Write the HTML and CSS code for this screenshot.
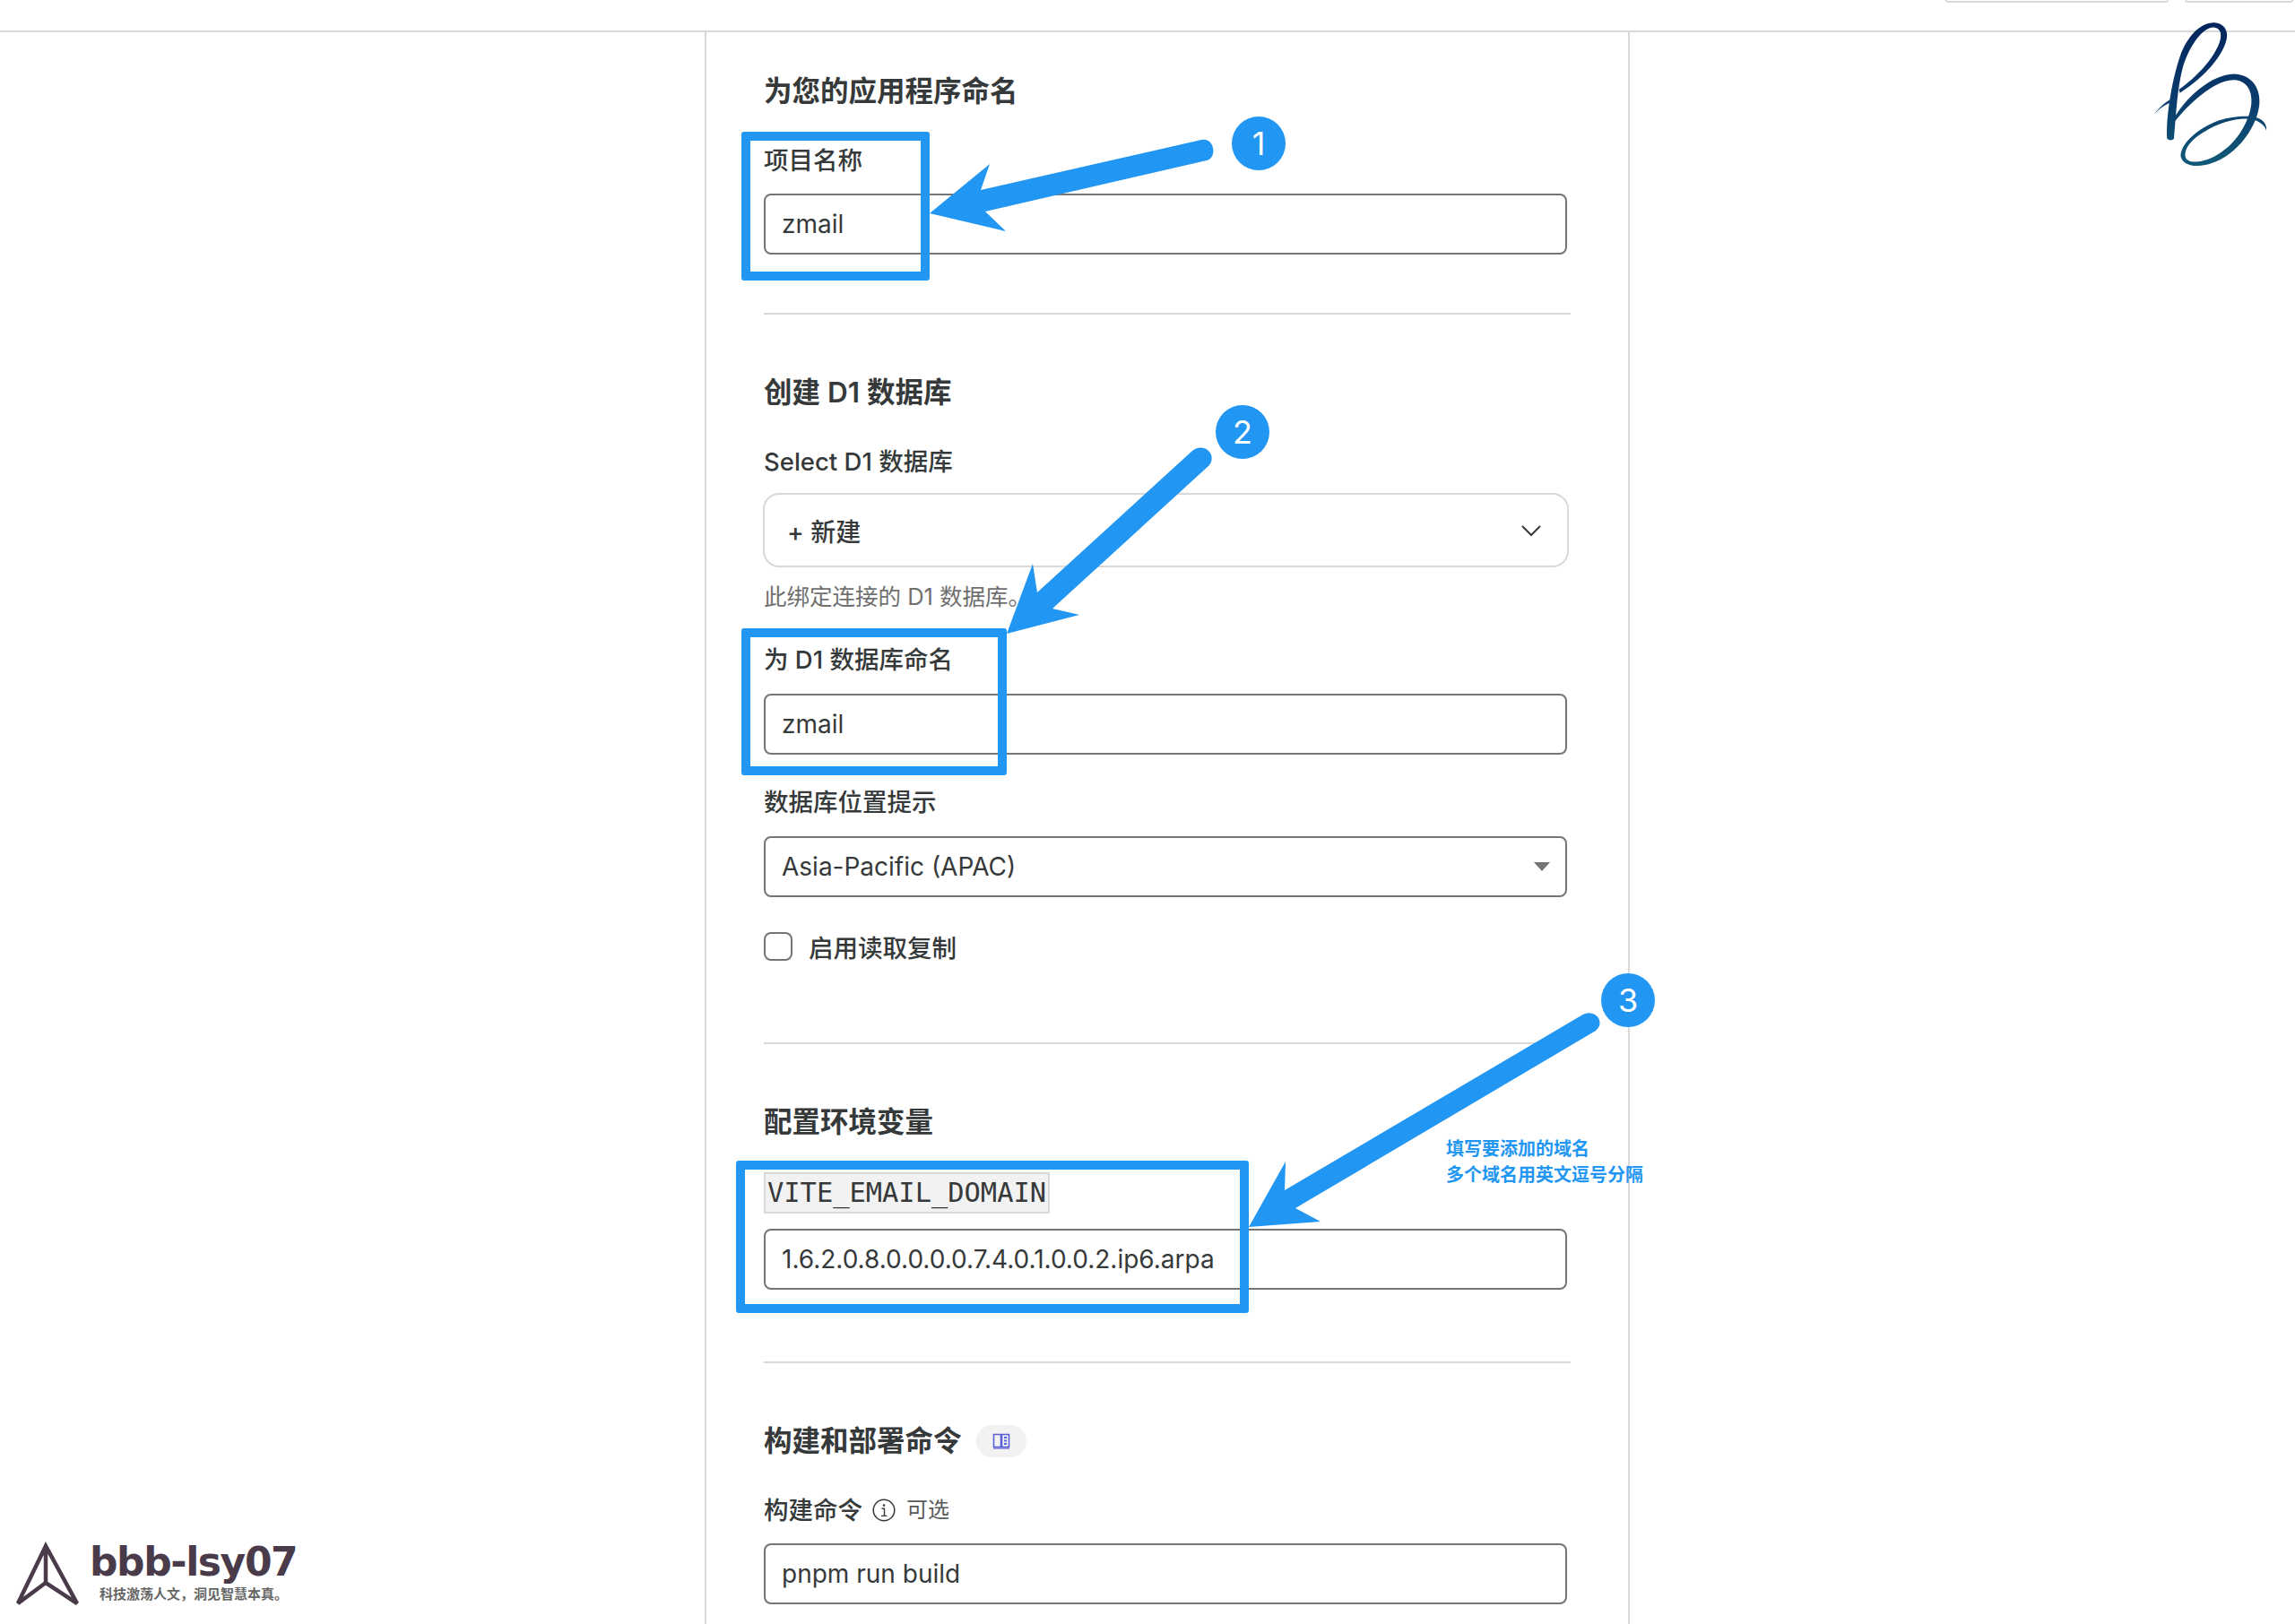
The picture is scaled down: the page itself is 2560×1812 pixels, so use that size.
FILE: index.html
```html
<!DOCTYPE html>
<html lang="zh-CN">
<head>
    <meta charset="UTF-8">
    <meta name="viewport" content="width=device-width, initial-scale=1.0">
    <title>创建应用程序</title>
    <link rel="stylesheet" href="styles.css">
</head>
<body>

    <header class="topbar">
        <span class="top-btn top-btn-wide"></span>
        <span class="top-btn top-btn-small"></span>
    </header>

    <main class="column">
        <section class="group">
            <h2 class="group-title">为您的应用程序命名</h2>
            <div class="label">项目名称</div>
            <div class="input">zmail</div>
        </section>

        <section class="group">
            <h2 class="group-title">创建 D1 数据库</h2>
            <div class="label">Select D1 数据库</div>
            <div class="picker">
                <span>+ 新建</span>
                <svg class="chevron" viewBox="0 0 24 14"><path d="M2 2l10 10L22 2"/></svg>
            </div>
            <div class="hint">此绑定连接的 D1 数据库。</div>
            <div class="label label-after-hint">为 D1 数据库命名</div>
            <div class="input input-tight">zmail</div>
            <div class="label label-after-input">数据库位置提示</div>
            <div class="input input-tight select">
                <span>Asia-Pacific (APAC)</span>
                <span class="caret"></span>
            </div>
            <div class="check-row">
                <span class="checkbox"></span>
                <span class="check-label">启用读取复制</span>
            </div>
        </section>

        <section class="group group-env">
            <h2 class="group-title">配置环境变量</h2>
            <div class="env-name"><code>VITE_EMAIL_DOMAIN</code></div>
            <div class="input input-env">1.6.2.0.8.0.0.0.0.7.4.0.1.0.0.2.ip6.arpa</div>
        </section>

        <section class="group group-last">
            <h2 class="group-title title-row">
                构建和部署命令
                <span class="doc-badge">
                    <svg viewBox="0 0 20 20" width="20" height="20">
                        <path d="M1.5 2.5h8v14h-8zM10.5 2.5h8v14h-8z" fill="none" stroke="#5b5fd6" stroke-width="1.6"/>
                        <path d="M13 6h3M13 9.5h3M13 13h3" stroke="#5b5fd6" stroke-width="1.8"/>
                        <path d="M1 18h18" stroke="#5b5fd6" stroke-width="1.2"/>
                    </svg>
                </span>
            </h2>
            <div class="label label-row">
                构建命令
                <svg class="info" viewBox="0 0 26 26" width="26" height="26">
                    <circle cx="13" cy="13" r="11.8" fill="none" stroke="#36393a" stroke-width="1.5"/>
                    <circle cx="13" cy="7.6" r="1.3" fill="#36393a"/>
                    <path d="M10.5 11.2h3v8M10 19.4h6.4" fill="none" stroke="#36393a" stroke-width="1.4"/>
                </svg>
                <span class="optional">可选</span>
            </div>
            <div class="input">pnpm run build</div>
        </section>
    </main>

    <!-- hand drawn annotations on top of the screenshot -->
    <div class="mark mark-1"></div>
    <div class="mark mark-2"></div>
    <div class="mark mark-3"></div>

    <svg class="arrows" viewBox="0 0 2560 1812" width="2560" height="1812">
        <path d="M1037 238L1104 183L1094 212L1340 156C1355 153 1358 176 1346 179L1099 236L1122 258Z"/>
        <path d="M1123 707L1152 629L1157 661L1330 503C1342 493 1358 506 1349 519L1174 679L1204 686Z"/>
        <path d="M1393 1369L1434 1296L1433 1328L1764 1133C1778 1124 1792 1140 1780 1150L1445 1348L1473 1363Z"/>
    </svg>

    <span class="step step-1">1</span>
    <span class="step step-2">2</span>
    <span class="step step-3">3</span>

    <div class="note">填写要添加的域名<br>多个域名用英文逗号分隔</div>

    <svg class="signature" viewBox="810 70 400 500" width="133" height="167">
        <defs>
            <linearGradient id="ink" gradientUnits="userSpaceOnUse" x1="1000" y1="80" x2="1000" y2="560">
                <stop offset="0" stop-color="#03245c"/>
                <stop offset="0.55" stop-color="#0b3d6e"/>
                <stop offset="1" stop-color="#115a78"/>
            </linearGradient>
        </defs>
        <path fill="url(#ink)" d="M862 465C858 400 875 280 905 190C930 120 975 75 1020 76C1050 77 1068 100 1062 130C1052 180 1000 250 905 312L902 300C985 240 1035 170 1042 125C1045 100 1030 90 1012 92C975 98 935 160 915 225C895 300 892 390 885 465Q875 475 862 465Z"/>
        <path fill="url(#ink)" d="M882 404C920 330 1010 250 1085 248C1140 248 1175 290 1172 345C1168 420 1100 520 1010 548C960 565 915 555 908 525C905 490 950 440 1020 410C1070 390 1130 385 1165 395C1185 402 1198 418 1195 438C1190 420 1170 405 1145 400C1100 393 1040 410 990 440C945 465 915 500 925 530C935 550 980 545 1020 525C1090 490 1140 410 1145 345C1148 300 1125 268 1085 268C1030 268 950 330 890 405Z"/>
        <path fill="url(#ink)" d="M818 385C835 360 860 340 880 330L880 342C855 350 835 365 818 385Z"/>
    </svg>

    <div class="watermark">
        <svg class="watermark-icon" viewBox="0 0 76 76" width="76" height="76">
            <path d="M35 5L4 69L35 46L70 69ZM35 5V46" fill="none" stroke="#4a3b4b" stroke-width="4.5" stroke-linejoin="miter"/>
        </svg>
        <div>
            <div class="watermark-name">bbb-lsy07</div>
            <div class="watermark-tag">科技激荡人文，洞见智慧本真。</div>
        </div>
    </div>

</body>
</html>
```

FILE: styles.css
```css
* {
    box-sizing: border-box;
}

html, body {
    margin: 0;
    padding: 0;
}

body {
    position: relative;
    width: 2560px;
    height: 1812px;
    overflow: hidden;
    background-color: #fff;
    color: #36393a;
    font-family: Inter, "Noto Sans CJK SC", sans-serif;
}

.topbar {
    display: flex;
    justify-content: flex-end;
    gap: 18px;
    height: 36px;
    padding-right: 2px;
    border-bottom: 2px solid #d9d9d9;
}

.top-btn {
    height: 3px;
    border: 2px solid #d9d9d9;
    border-top: none;
    border-radius: 0 0 8px 8px;
}

.top-btn-wide {
    width: 249px;
}

.top-btn-small {
    width: 121px;
}

.column {
    width: 1032px;
    height: 1776px;
    margin-left: 786px;
    padding: 44px 0 0 64px;
    border-left: 2px solid #d9d9d9;
    border-right: 2px solid #d9d9d9;
}

.group {
    width: 900px;
    padding-bottom: 65px;
    margin-bottom: 65px;
    border-bottom: 2px solid #d9d9d9;
}

.group-env {
    padding-bottom: 80px;
}

.group-last {
    border-bottom: none;
}

.group-title {
    margin: 0;
    font-size: 31.5px;
    line-height: 44px;
    font-weight: 600;
}

.title-row {
    display: flex;
    align-items: center;
}

.label {
    margin-top: 37px;
    font-size: 27.5px;
    line-height: 36px;
    font-weight: 500;
}

.label-after-hint {
    margin-top: 34px;
}

.label-after-input {
    margin-top: 35px;
}

.label-row {
    display: flex;
    align-items: center;
}

.input {
    display: flex;
    align-items: center;
    justify-content: space-between;
    width: 896px;
    height: 68px;
    margin-top: 19px;
    padding: 0 18px;
    border: 2px solid #757575;
    border-radius: 8px;
    background-color: #fff;
    font-size: 28px;
}

.input-tight {
    margin-top: 20px;
}

.input-env {
    margin-top: 17px;
}

.caret {
    width: 0;
    height: 0;
    margin-right: -1px;
    border-left: 9px solid transparent;
    border-right: 9px solid transparent;
    border-top: 10px solid #757575;
}

.picker {
    display: flex;
    align-items: center;
    justify-content: space-between;
    width: 899px;
    height: 83px;
    margin: 17px 0 0 -1px;
    padding: 0 28px 0 25px;
    border: 2px solid #d9d9d9;
    border-radius: 18px;
    font-size: 28px;
    font-weight: 500;
}

.chevron {
    width: 24px;
    height: 14px;
    fill: none;
    stroke: #36393a;
    stroke-width: 2;
}

.hint {
    margin-top: 15px;
    color: #6f6f6f;
    font-size: 25.5px;
    line-height: 36px;
}

.check-row {
    display: flex;
    align-items: center;
    gap: 18px;
    height: 32px;
    margin-top: 39px;
    margin-bottom: 26px;
}

.checkbox {
    width: 32px;
    height: 32px;
    border: 2px solid #757575;
    border-radius: 8px;
}

.check-label {
    font-size: 27.5px;
    font-weight: 500;
}

.env-name {
    display: flex;
    margin-top: 34px;
}

.env-name code {
    height: 46px;
    padding: 0 2px;
    border: 2px solid #d9d9d9;
    background-color: #f2f2f2;
    font-family: "DejaVu Sans Mono", monospace;
    font-size: 30.4px;
    line-height: 42px;
}

.doc-badge {
    display: flex;
    align-items: center;
    justify-content: center;
    width: 56px;
    height: 36px;
    margin-left: 16px;
    border-radius: 18px;
    background-color: #f2f2f2;
}

.info {
    margin-left: 11px;
}

.optional {
    margin-left: 12px;
    color: #595959;
    font-size: 24px;
    font-weight: 400;
}

.mark {
    position: absolute;
    border: 10px solid #2196f3;
    border-radius: 3px;
}

.mark-1 {
    left: 827px;
    top: 147px;
    width: 210px;
    height: 166px;
}

.mark-2 {
    left: 827px;
    top: 701px;
    width: 296px;
    height: 164px;
}

.mark-3 {
    left: 821px;
    top: 1295px;
    width: 572px;
    height: 170px;
}

.arrows {
    position: absolute;
    left: 0;
    top: 0;
    fill: #2196f3;
}

.step {
    position: absolute;
    width: 60px;
    height: 60px;
    border-radius: 50%;
    background-color: #2196f3;
    color: #fff;
    font-size: 36px;
    line-height: 60px;
    text-align: center;
}

.step-1 {
    left: 1374px;
    top: 130px;
}

.step-2 {
    left: 1356px;
    top: 452px;
}

.step-3 {
    left: 1786px;
    top: 1086px;
}

.note {
    position: absolute;
    left: 1613px;
    top: 1268px;
    color: #2196f3;
    font-size: 20px;
    line-height: 29px;
    font-weight: 600;
}

.signature {
    position: absolute;
    left: 2400px;
    top: 23px;
}

.watermark {
    position: absolute;
    left: 16px;
    top: 1720px;
    display: flex;
    gap: 7px;
}

.watermark-name {
    color: #4a3b4b;
    font-family: "DejaVu Sans", sans-serif;
    font-size: 44px;
    font-weight: 700;
    line-height: 46px;
    letter-spacing: -1.4px;
    margin-left: 1px;
}

.watermark-tag {
    margin: 3px 0 0 12px;
    color: #666;
    font-size: 15px;
    font-weight: 700;
    line-height: 20px;
    white-space: nowrap;
}
```
